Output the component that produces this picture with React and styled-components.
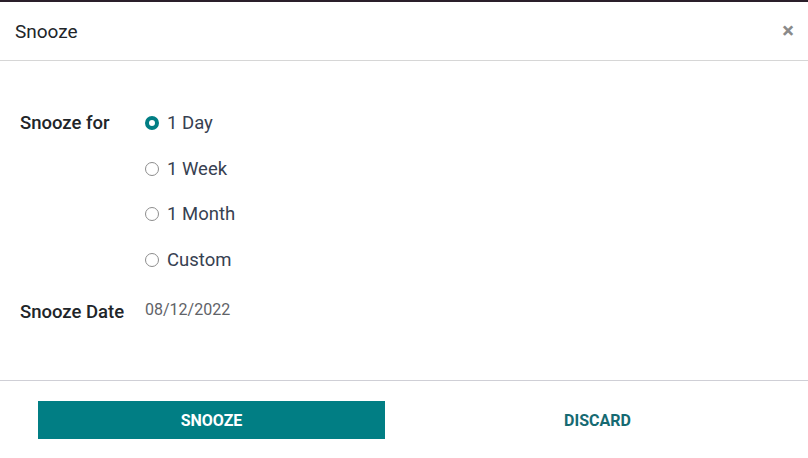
import React, { useState } from "react";
import styled, { createGlobalStyle } from "styled-components";

const Global = createGlobalStyle`
  html, body { margin: 0; padding: 0; background: #ffffff; }
  body { font-family: Roboto, "Noto Sans", sans-serif; color: #212529; }
  * { box-sizing: border-box; }
`;

const Page = styled.div`
  width: 808px;
  height: 458px;
  display: flex;
  flex-direction: column;
  background: #ffffff;
  overflow: hidden;
`;

const Backdrop = styled.div`
  height: 2px;
  background: #2a1f2a;
  flex: none;
`;

const Header = styled.header`
  height: 59px;
  display: flex;
  align-items: center;
  justify-content: space-between;
  padding: 0 14px 0 15px;
  border-bottom: 1px solid #d6d6d6;
  flex: none;
`;

const Title = styled.h4`
  margin: 0;
  font-size: 19px;
  font-weight: 400;
  color: #212529;
`;

const Close = styled.button`
  border: none;
  background: none;
  padding: 0;
  font-family: Roboto, sans-serif;
  font-size: 22px;
  line-height: 1;
  color: #8a8a8a;
  font-weight: 700;
  cursor: pointer;
`;

const Body = styled.div`
  flex: 1;
  padding: 50px 20px 0;
  display: grid;
  grid-template-columns: 125px 1fr;
  align-content: start;
  row-gap: 28px;
`;

const Label = styled.div`
  font-size: 18.5px;
  font-weight: 500;
  color: #212529;
  line-height: 24px;
`;

const Options = styled.div`
  display: flex;
  flex-direction: column;
  gap: 21.5px;
`;

const Option = styled.label`
  display: flex;
  align-items: center;
  gap: 8px;
  font-size: 18.5px;
  line-height: 24px;
  color: #374151;
  cursor: pointer;
`;

const Radio = styled.span`
  width: 14px;
  height: 14px;
  border-radius: 50%;
  flex: none;
  border: ${(p) => (p.$checked ? "4px solid #017e84" : "1px solid #8d8d8d")};
  background: #ffffff;
`;

const DateValue = styled.div`
  font-size: 16px;
  line-height: 24px;
  color: #5f6368;
  margin-top: -2px;
`;

const Footer = styled.footer`
  height: 78px;
  border-top: 1px solid #cfcfd6;
  flex: none;
  display: grid;
  grid-template-columns: 347px 347px;
  column-gap: 39px;
  padding: 20px 38px 0;
  align-content: start;
`;

const Button = styled.button`
  height: 38px;
  border: none;
  font-family: Roboto, sans-serif;
  font-size: 16px;
  font-weight: 700;
  text-transform: uppercase;
  cursor: pointer;
  background: ${(p) => (p.$primary ? "#017e84" : "transparent")};
  color: ${(p) => (p.$primary ? "#ffffff" : "#166a72")};
`;

const options = ["1 Day", "1 Week", "1 Month", "Custom"];

export default function App() {
  const [sel, setSel] = useState("1 Day");
  return (
    <Page>
      <Global />
      <Backdrop />
      <Header>
        <Title>Snooze</Title>
        <Close aria-label="Close">×</Close>
      </Header>
      <Body>
        <Label>Snooze for</Label>
        <Options>
          {options.map((o) => (
            <Option key={o} onClick={() => setSel(o)}>
              <Radio $checked={sel === o} />
              {o}
            </Option>
          ))}
        </Options>
        <Label>Snooze Date</Label>
        <DateValue>08/12/2022</DateValue>
      </Body>
      <Footer>
        <Button $primary>Snooze</Button>
        <Button>Discard</Button>
      </Footer>
    </Page>
  );
}
